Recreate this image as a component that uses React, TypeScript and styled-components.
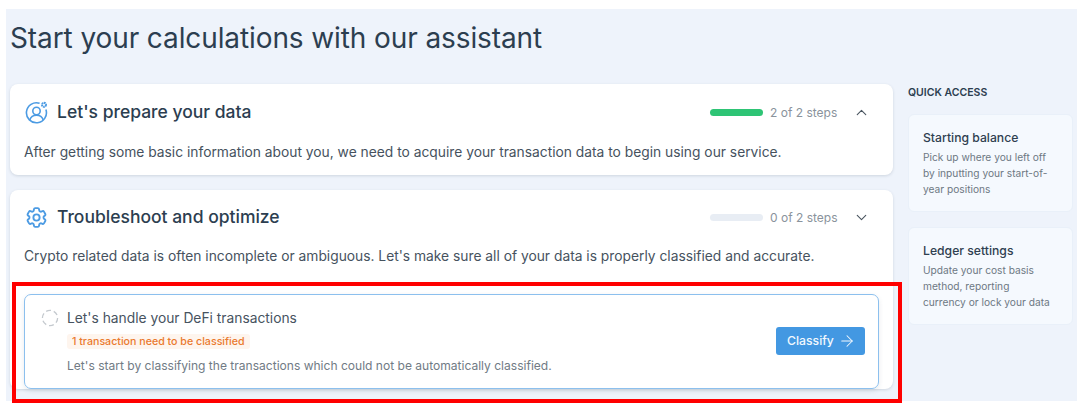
import { ArrowRight, ChevronDown, ChevronUp } from "lucide-react";
import { HiOutlineCog6Tooth } from "react-icons/hi2";
import styled, { createGlobalStyle } from "styled-components";

const GlobalStyle = createGlobalStyle`
  html, body {
    margin: 0;
    padding: 0;
    background: #fff;
    font-family: "Inter", "Open Sans", sans-serif;
  }
`;

const Frame = styled.div`
  position: relative;
  width: 1090px;
  height: 412px;
  overflow: hidden;
  padding: 9px 13px 0 6px;
  box-sizing: border-box;
`;

const Page = styled.div`
  height: 392px;
  overflow: hidden;
  background: #eef3fb;
  padding: 0 4px;
  box-sizing: border-box;
`;

const Title = styled.h1`
  margin: 0;
  height: 75px;
  padding-top: 10px;
  box-sizing: border-box;
  font-size: 28px;
  line-height: 38px;
  font-weight: 400;
  letter-spacing: -0.1px;
  color: #2c3e50;
`;

const Columns = styled.div`
  display: flex;
  gap: 15px;
`;

const Main = styled.div`
  width: 883px;
  display: flex;
  flex-direction: column;
  gap: 15px;
`;

const Card = styled.section<{ $tight?: boolean }>`
  background: #fff;
  border-radius: 8px;
  box-shadow: 0 1px 3px rgba(44, 62, 80, 0.16);
  padding: ${(p) => (p.$tight ? "13px" : "14px")} 14px 0;
  box-sizing: border-box;
`;

const CardHead = styled.header`
  display: flex;
  align-items: center;
  height: 28px;
  padding-left: 1px;
`;

const CardTitle = styled.h2`
  margin: 0 0 0 9px;
  flex: 1;
  font-size: 17.5px;
  line-height: 28px;
  font-weight: 500;
  color: #2c3e50;
`;

const Track = styled.div<{ $done?: boolean }>`
  width: 53px;
  height: 7px;
  border-radius: 4px;
  background: ${(p) => (p.$done ? "#2ec475" : "#e8edf4")};
`;

const Steps = styled.span`
  margin-left: 7px;
  width: 67px;
  white-space: nowrap;
  font-size: 12px;
  color: #8a939c;
`;

const Toggle = styled.span`
  display: flex;
  margin-left: 17px;
  margin-right: 9px;
  margin-left: 16px;
  color: #4a5560;
`;

const CardText = styled.p<{ $gap: number; $bottom: number }>`
  margin: ${(p) => p.$gap}px 0 0;
  padding-bottom: ${(p) => p.$bottom}px;
  font-size: 13.8px;
  line-height: 20px;
  color: #46525e;
`;

const Task = styled.div`
  margin-top: 28px;
  height: 95px;
  box-sizing: border-box;
  border: 1px solid #8cc0ee;
  border-radius: 7px;
  box-shadow: 0 2px 5px rgba(44, 62, 80, 0.1);
  display: flex;
  align-items: center;
  padding: 0 13px 0 16px;
`;

const PendingMark = styled.span`
  display: flex;
  align-self: flex-start;
  margin-top: 14px;
`;

const TaskBody = styled.div`
  flex: 1;
  margin-left: 8px;
`;

const TaskTitle = styled.div`
  font-size: 13.8px;
  line-height: 18px;
  font-weight: 400;
  color: #47535f;
`;

const Badge = styled.span`
  display: block;
  width: fit-content;
  margin-top: 7px;
  padding: 0 5px;
  height: 15px;
  line-height: 15px;
  border-radius: 3px;
  background: #fef5ee;
  font-size: 10.65px;
  font-weight: 500;
  color: #ea7a2e;
`;

const TaskText = styled.div`
  margin-top: 9px;
  font-size: 12.05px;
  line-height: 16px;
  color: #717b85;
`;

const ClassifyButton = styled.button`
  display: flex;
  align-items: center;
  justify-content: center;
  gap: 4px;
  width: 89px;
  height: 28px;
  margin-bottom: 2px;
  padding: 0 0 0 2px;
  border: 0;
  border-radius: 3px;
  background: #4398e2;
  color: #f2f8fe;
  font-family: inherit;
  font-size: 12.2px;
  font-weight: 500;
`;

const Side = styled.aside`
  width: 165px;
`;

const SideHeading = styled.h3`
  margin: 0;
  height: 30px;
  padding-top: 2px;
  box-sizing: border-box;
  font-size: 10.5px;
  line-height: 14px;
  font-weight: 600;
  color: #2c3e50;
`;

const Shortcut = styled.div`
  height: 98px;
  margin-bottom: 15px;
  padding: 14px 20px 0 14px;
  box-sizing: border-box;
  background: #f5f9fe;
  border: 1px solid #e9f0f9;
  border-radius: 6px;
`;

const ShortcutTitle = styled.div`
  font-size: 12.2px;
  line-height: 18px;
  font-weight: 500;
  color: #2f4050;
`;

const ShortcutText = styled.div`
  margin-top: 2px;
  font-size: 10.2px;
  line-height: 16px;
  color: #6d7883;
`;

const Highlight = styled.div`
  position: absolute;
  left: 12px;
  top: 282px;
  width: 890px;
  height: 121px;
  box-sizing: border-box;
  border: 4px solid #ff0000;
`;

const ProfileIcon = () => (
  <svg width="23" height="23" viewBox="0 0 23 23" fill="none" stroke="#4c9be3" strokeWidth="1.6">
    <path d="M14.6 2.3A10 10 0 1 0 20.9 8.6" />
    <circle cx="11.5" cy="10" r="3.7" />
    <path d="M4.8 19c1-3.2 3.6-4.7 6.7-4.7s5.7 1.5 6.7 4.7" />
    <circle cx="19" cy="3.8" r="2" strokeWidth="2" strokeDasharray="1.6 0.5" />
  </svg>
);

const PendingIcon = () => (
  <svg width="18" height="18" viewBox="0 0 18 18" fill="none" stroke="#c4c9ce" strokeWidth="1.3">
    <circle cx="9" cy="9" r="7.6" strokeDasharray="5 2.9" />
  </svg>
);

const GearMark = styled.span`
  display: flex;
  margin: 0 -1px;
  color: #4c9be3;
`;

const App = () => {
  return (
    <>
      <GlobalStyle />
      <Frame>
        <Page>
          <Title>Start your calculations with our assistant</Title>
          <Columns>
            <Main>
              <Card>
                <CardHead>
                  <ProfileIcon />
                  <CardTitle>Let's prepare your data</CardTitle>
                  <Track $done />
                  <Steps>2 of 2 steps</Steps>
                  <Toggle>
                    <ChevronUp size={17} strokeWidth={1.6} />
                  </Toggle>
                </CardHead>
                <CardText $gap={16} $bottom={13}>
                  After getting some basic information about you, we need to acquire your transaction data to begin
                  using our service.
                </CardText>
              </Card>
              <Card $tight>
                <CardHead>
                  <GearMark>
                    <HiOutlineCog6Tooth size={25} strokeWidth={1.8} />
                  </GearMark>
                  <CardTitle>Troubleshoot and optimize</CardTitle>
                  <Track />
                  <Steps>0 of 2 steps</Steps>
                  <Toggle>
                    <ChevronDown size={17} strokeWidth={1.6} />
                  </Toggle>
                </CardHead>
                <CardText $gap={15} $bottom={0}>
                  Crypto related data is often incomplete or ambiguous. Let's make sure all of your data is properly
                  classified and accurate.
                </CardText>
                <Task>
                  <PendingMark>
                    <PendingIcon />
                  </PendingMark>
                  <TaskBody>
                    <TaskTitle>Let's handle your DeFi transactions</TaskTitle>
                    <Badge>1 transaction need to be classified</Badge>
                    <TaskText>Let's start by classifying the transactions which could not be automatically classified.</TaskText>
                  </TaskBody>
                  <ClassifyButton>
                    Classify <ArrowRight size={18} strokeWidth={1.4} />
                  </ClassifyButton>
                </Task>
              </Card>
            </Main>
            <Side>
              <SideHeading>QUICK ACCESS</SideHeading>
              <Shortcut>
                <ShortcutTitle>Starting balance</ShortcutTitle>
                <ShortcutText>Pick up where you left off by inputting your start-of-year positions</ShortcutText>
              </Shortcut>
              <Shortcut>
                <ShortcutTitle>Ledger settings</ShortcutTitle>
                <ShortcutText>Update your cost basis method, reporting currency or lock your data</ShortcutText>
              </Shortcut>
            </Side>
          </Columns>
        </Page>
        <Highlight />
      </Frame>
    </>
  );
};

export default App;
